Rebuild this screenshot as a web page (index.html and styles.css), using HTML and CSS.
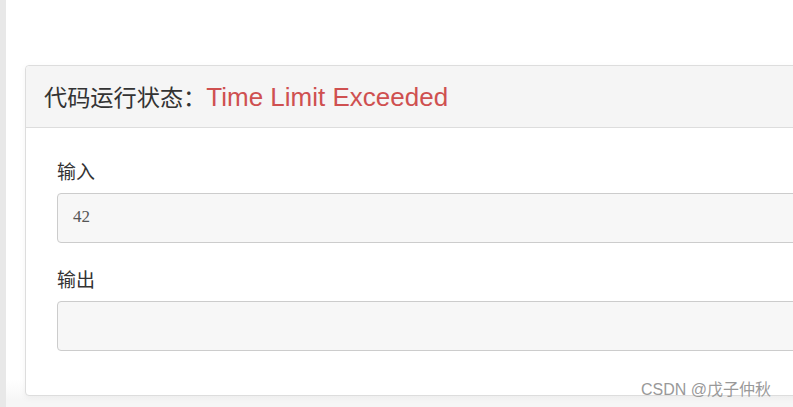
FILE: index.html
```html
<!DOCTYPE html>
<html lang="zh-CN">
<head>
<meta charset="utf-8">
<title>代码运行状态</title>
<link rel="stylesheet" href="styles.css">
</head>
<body>
<div class="page">
  <div class="side"></div>
  <div class="main">
    <div class="card">
      <div class="card-head">
        <span class="head-label">代码运行状态：</span><span class="head-status">Time Limit Exceeded</span>
      </div>
      <div class="card-body">
        <div class="field">
          <div class="field-label">输入</div>
          <div class="field-box">42</div>
        </div>
        <div class="field">
          <div class="field-label">输出</div>
          <div class="field-box"></div>
        </div>
      </div>
    </div>
  </div>
</div>
<div class="watermark">CSDN @戊子仲秋</div>
</body>
</html>
```

FILE: styles.css
```css
html, body {
  margin: 0;
  padding: 0;
  background: #ffffff;
}
body {
  font-family: "Liberation Sans", "Noto Sans CJK SC", sans-serif;
  color: #333333;
  width: 793px;
  height: 407px;
  overflow: hidden;
  position: relative;
}
.page {
  display: flex;
  height: 407px;
}
.side {
  width: 6px;
  flex: 0 0 6px;
  background: #e8e8e8;
}
.main {
  flex: 1;
  overflow: hidden;
  padding: 65px 0 0 19px;
  background: linear-gradient(to bottom, #ffffff 0, #ffffff 380px, #f6f6f6 400px);
}
.card {
  width: calc(100% + 20px);
  background: #ffffff;
  border: 1px solid #dddddd;
  border-radius: 4px;
  box-shadow: 0 2px 6px rgba(0, 0, 0, 0.05);
}
.card-head {
  height: 62px;
  background: #f5f5f5;
  border-bottom: 1px solid #dddddd;
  border-radius: 4px 4px 0 0;
  padding-left: 18px;
  display: flex;
  align-items: baseline;
  padding-top: 14px;
  box-sizing: border-box;
  line-height: 34px;
}
.head-label {
  font-size: 23.2px;
  color: #333333;
}
.head-status {
  font-size: 26px;
  color: #cf5050;
}
.card-body {
  padding: 32px 0 44px 31px;
}
.field + .field {
  margin-top: 25px;
}
.field-label {
  font-size: 19px;
  line-height: 26px;
  margin-bottom: 7px;
  color: #333333;
}
.field-box {
  height: 50px;
  box-sizing: border-box;
  background: #f7f7f7;
  border: 1px solid #cccccc;
  border-radius: 4px;
  padding: 11px 15px;
  font-family: "Liberation Serif", "DejaVu Serif", serif;
  font-size: 17px;
  line-height: 24px;
  color: #555555;
}
.watermark {
  position: absolute;
  left: 641px;
  top: 380px;
  font-size: 16px;
  line-height: 20px;
  color: #999999;
  white-space: nowrap;
}
```
